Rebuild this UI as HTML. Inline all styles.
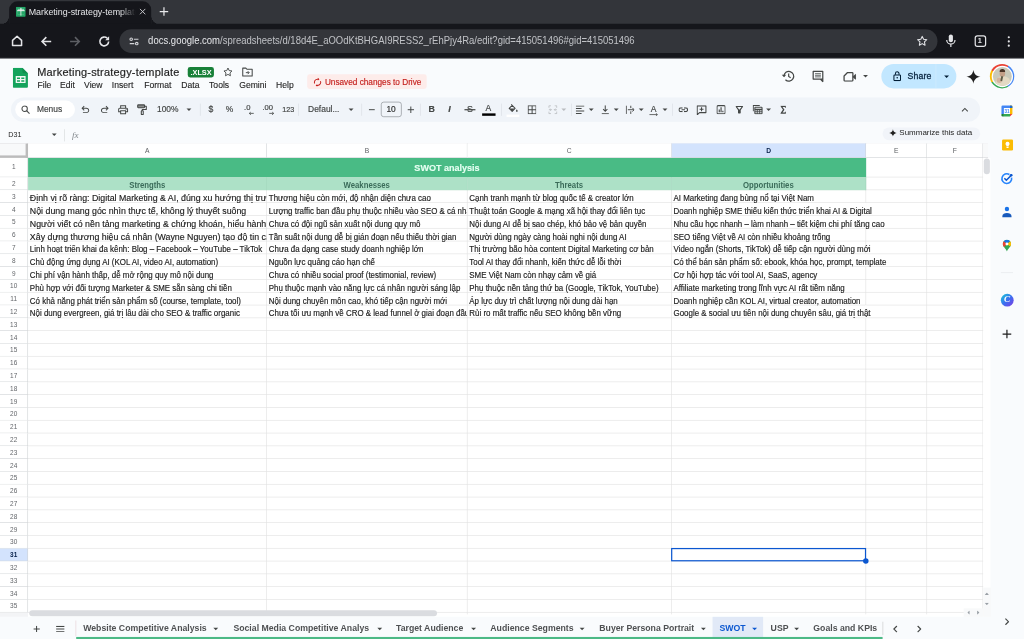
<!DOCTYPE html>
<html lang="en">
<head>
<meta charset="utf-8">
<title>Marketing-strategy-template</title>
<style>
html,body{margin:0;padding:0;width:1024px;height:639px;overflow:hidden;background:#fff;}
*{box-sizing:border-box;}
#clip{position:absolute;left:0;top:0;width:1024px;height:639px;overflow:hidden;}
#app{position:absolute;left:0;top:0;width:1680px;height:1049px;transform:scale(0.609524);transform-origin:0 0;
 font-family:"Liberation Sans",sans-serif;color:#1f1f1f;background:#f9fbfd;overflow:hidden;}
.abs{position:absolute;}
.ic{position:absolute;transform:translate(-50%,-50%);display:block;}
.t{position:absolute;white-space:nowrap;line-height:1;}

/* ---------- Chrome ---------- */
#tabstrip{position:absolute;left:0;top:0;width:1680px;height:40px;background:#33353a;}
#tab{position:absolute;left:15px;top:2px;width:233px;height:38px;background:#15161b;border-radius:14px 14px 0 0;}
#tab:before,#tab:after{content:"";position:absolute;bottom:0;width:14px;height:14px;}
#tab:before{left:-14px;background:radial-gradient(circle at 0 0,rgba(0,0,0,0) 13.5px,#15161b 14px);}
#tab:after{right:-14px;background:radial-gradient(circle at 100% 0,rgba(0,0,0,0) 13.5px,#15161b 14px);}
#ctool{position:absolute;left:0;top:39px;width:1680px;height:56px;background:#15161b;}
#omni{position:absolute;left:196px;top:9px;width:1342px;height:39px;border-radius:20px;background:#33353a;}

/* ---------- Sheets header ---------- */
#shead{position:absolute;left:0;top:95px;width:1680px;height:64px;background:#f9fbfd;}
.menu{position:absolute;top:38.300px;font-size:14.100px;color:#1f1f1f;-webkit-text-stroke:0.200px #1f1f1f;white-space:nowrap;line-height:1;}
#tbar{position:absolute;left:18px;top:159.5px;width:1590px;height:40px;border-radius:20px;background:#f0f4f9;}
.sep{position:absolute;top:10px;width:1px;height:20px;background:#d9dde3;}
.tx{position:absolute;white-space:nowrap;line-height:1;color:#444746;-webkit-text-stroke:0.300px #444746;}
.dd{position:absolute;width:0;height:0;border-left:4.2px solid transparent;border-right:4.2px solid transparent;border-top:4.6px solid #444746;transform:translate(-50%,-50%);}

/* ---------- Grid ---------- */
#sheet{position:absolute;left:0;top:199.5px;width:1626px;height:813px;background:#f9fbfd;}
#grid{position:absolute;left:0;top:35.5px;width:1621px;height:774px;overflow:hidden;background:#fff;}
.colh{position:absolute;top:0;height:24px;background:#fff;border-right:1px solid #d0d3d6;border-bottom:1px solid #d0d3d6;font-size:11px;color:#5b5e61;text-align:center;line-height:24px;}
.rowh{position:absolute;left:0;width:46px;background:#fff;border-right:1px solid #d0d3d6;border-bottom:1px solid #d0d3d6;font-size:10.600px;color:#63666a;text-align:center;}
.vl{position:absolute;top:24px;width:1px;height:750px;background:#e1e1e1;}
.hl{position:absolute;left:46px;width:1575px;height:1px;background:#e1e1e1;}
.cell{position:absolute;height:22px;line-height:27px;font-size:13.700px;color:#1b1b1b;-webkit-text-stroke:0.250px #1b1b1b;white-space:nowrap;overflow:hidden;padding-left:2.600px;}
.big{font-size:15px;line-height:25.4px;}
.sx{display:inline-block;transform:scaleX(0.950);transform-origin:0 50%;}
.big .sx{transform:scaleX(0.963);}
.hx{display:inline-block;transform:scaleX(0.935);}
.h2{position:absolute;top:57px;height:21px;line-height:27.500px;overflow:hidden;font-size:13.600px;font-weight:bold;color:#3a6b59;text-align:center;background:#ade1c7;border-right:1px solid #a3d6bd;}
</style>
</head>
<body>
<div id="clip"><div id="app">

<!-- ================= CHROME ================= -->
<div id="tabstrip">
  <div id="tab">
    <svg class="abs" style="left:10.5px;top:9px" width="16.5" height="16.5" viewBox="0 0 16 16"><rect width="16" height="16" rx="1.6" fill="#23a566"/><rect x="3" y="3.4" width="10" height="9.2" fill="#8ed1b1"/><rect x="7.2" y="2" width="1.7" height="12" fill="#f1f1f1"/><rect x="2" y="5.6" width="12" height="1.6" fill="#f1f1f1"/><rect x="3" y="7.2" width="4.2" height="5.4" fill="#23a566"/><rect x="8.9" y="7.2" width="4.1" height="5.4" fill="#23a566"/></svg>
    <div class="t" id="tabtitle" style="left:32px;top:6px;height:24px;line-height:24px;font-size:14.6px;color:#e6e7ea;width:176px;overflow:hidden;-webkit-mask-image:linear-gradient(90deg,#000 0,#000 150px,rgba(0,0,0,0) 176px);mask-image:linear-gradient(90deg,#000 0,#000 150px,rgba(0,0,0,0) 176px);">Marketing-strategy-template</div>
    <svg class="ic" style="left:218.5px;top:17px" width="11" height="11" viewBox="0 0 11 11"><path d="M1 1 10 10M10 1 1 10" stroke="#c4c6ca" stroke-width="1.6" fill="none"/></svg>
  </div>
  <svg class="ic" style="left:269px;top:19px" width="16" height="16" viewBox="0 0 16 16"><path d="M8 1v14M1 8h14" stroke="#e8e9eb" stroke-width="2" fill="none"/></svg>
</div>
<div id="ctool">
  <!-- home -->
  <svg class="ic" style="left:28px;top:28px" width="20" height="20" viewBox="0 0 20 20"><path d="M2.600 9.200 10 2.400l7.400 6.800V17.600H2.600Z" fill="none" stroke="#e4e5e8" stroke-width="2.500" stroke-linejoin="round"/></svg>
  <!-- back -->
  <svg class="ic" style="left:75.5px;top:28.5px" width="20" height="20" viewBox="0 0 20 20"><path d="M18 10H3.500M10 3 3 10l7 7" fill="none" stroke="#e4e5e8" stroke-width="2.600"/></svg>
  <!-- forward -->
  <svg class="ic" style="left:123px;top:28.5px" width="20" height="20" viewBox="0 0 20 20"><path d="M2 10h14.500M10 3l7 7-7 7" fill="none" stroke="#5d5f64" stroke-width="2.600"/></svg>
  <!-- reload -->
  <svg class="ic" style="left:170.5px;top:28.5px" width="22" height="22" viewBox="0 0 22 22"><path d="M18.200 11a7.200 7.200 0 1 1-2.200-5.200" fill="none" stroke="#e4e5e8" stroke-width="2.600"/><path d="M19 2.6V9h-6.4Z" fill="#e4e5e8"/></svg>
  <div id="omni">
    <!-- tune -->
    <svg class="ic" style="left:24px;top:19.500px" width="17.500" height="14.300" viewBox="0 0 22 18"><g fill="none" stroke="#d3d4d8" stroke-width="2.300"><circle cx="5" cy="4.500" r="2.600"/><path d="M10.5 4.5H20"/><circle cx="16.5" cy="13.5" r="2.6"/><path d="M2 13.5h9.5"/></g></svg>
    <div class="t" id="url" style="left:47px;top:11.500px;font-size:16.800px;color:#c0c2c6;transform:scaleX(0.930);transform-origin:0 0;"><span style="color:#e6e7ea">docs.google.com</span>/spreadsheets/d/18d4E_aOOdKtBHGAI9RESS2_rEhPjy4Ra/edit?gid=415051496#gid=415051496</div>
    <!-- star -->
    <svg class="ic" style="left:1316.5px;top:19px" width="21" height="21" viewBox="0 0 24 24"><path d="M12 3.6l2.6 5.5 6 .8-4.4 4.2 1.1 6L12 17.2 6.7 20.1l1.1-6L3.4 9.9l6-.8z" fill="none" stroke="#e4e5e8" stroke-width="2" stroke-linejoin="round"/></svg>
  </div>
  <!-- mic -->
  <svg class="ic" style="left:1560px;top:28px" width="20" height="24" viewBox="0 0 20 24"><rect x="6.6" y="1.5" width="6.8" height="13" rx="3.4" fill="#e4e5e8"/><path d="M3.2 10.5a6.8 6.8 0 0 0 13.6 0M10 17.5V22" fill="none" stroke="#e4e5e8" stroke-width="2"/></svg>
  <!-- tab count -->
  <div class="abs" style="left:1598.5px;top:18.5px;width:19px;height:19px;border:2px solid #e4e5e8;border-radius:4.5px;"></div>
  <div class="t" style="left:1604.3px;top:22.4px;font-size:12px;font-weight:bold;color:#e4e5e8;">1</div>
  <!-- dots -->
  <svg class="ic" style="left:1655px;top:28.500px" width="5.200" height="19" viewBox="0 0 6 22"><circle cx="3" cy="3" r="2.1" fill="#e4e5e8"/><circle cx="3" cy="11" r="2.1" fill="#e4e5e8"/><circle cx="3" cy="19" r="2.1" fill="#e4e5e8"/></svg>
</div>

<!-- ================= SHEETS HEADER ================= -->
<div id="shead">
  <!-- logo -->
  <svg class="abs" style="left:21px;top:15.700px" width="24.800" height="33.500" viewBox="0 0 26 35" preserveAspectRatio="none"><path d="M2.4 0H16.5L26 9.5V32.6a2.4 2.4 0 0 1-2.4 2.4H2.4A2.4 2.4 0 0 1 0 32.6V2.4A2.4 2.4 0 0 1 2.4 0Z" fill="#14a35c"/><path d="M16.5 0 26 9.5H18.9a2.4 2.4 0 0 1-2.4-2.4Z" fill="#0c8043" opacity=".55"/><path d="M5 14.500h17v12H5Zm2.200 2.200v2.800h5.200v-2.800Zm7.400 0v2.800h5.200v-2.800ZM7.200 21.500v2.800h5.200v-2.800Zm7.400 0v2.800h5.200v-2.800Z" fill="#f1f8f4" fill-rule="evenodd"/></svg>
  <div class="t" id="doctitle" style="left:61px;top:13.600px;font-size:18px;letter-spacing:0.350px;color:#1f1f1f;-webkit-text-stroke:0.300px #1f1f1f;">Marketing-strategy-template</div>
  <div class="abs" style="left:308px;top:14.800px;width:42.500px;height:17.500px;border-radius:4px;background:#188038;"></div>
  <div class="t" style="left:312.500px;top:17.800px;font-size:12px;font-weight:bold;color:#fff;">.XLSX</div>
  <!-- star -->
  <svg class="ic" style="left:374px;top:22.800px" width="19" height="19" viewBox="0 0 24 24"><path d="M12 3.9l2.5 5.3 5.8.8-4.2 4.1 1 5.8L12 17.1l-5.1 2.8 1-5.8L3.7 10l5.8-.8z" fill="none" stroke="#444746" stroke-width="1.9" stroke-linejoin="round"/></svg>
  <!-- move to folder -->
  <svg class="ic" style="left:405.500px;top:22.800px" width="19" height="17" viewBox="0 0 20 18"><path d="M1.8 2.4h5.4l1.8 2h9.2v11.6H1.8Z" fill="none" stroke="#444746" stroke-width="1.8" stroke-linejoin="round"/><path d="M7.2 10.2h5.2M10.4 7.6l2.6 2.6-2.6 2.6" fill="none" stroke="#444746" stroke-width="1.6"/></svg>
  <div class="menu" style="left:61.5px">File</div>
  <div class="menu" style="left:98.5px">Edit</div>
  <div class="menu" style="left:138px">View</div>
  <div class="menu" style="left:183.5px">Insert</div>
  <div class="menu" style="left:236.5px">Format</div>
  <div class="menu" style="left:297.5px">Data</div>
  <div class="menu" style="left:343px">Tools</div>
  <div class="menu" style="left:392.5px">Gemini</div>
  <div class="menu" style="left:453px">Help</div>
  <!-- unsaved -->
  <div class="abs" style="left:504px;top:27.300px;width:196px;height:24px;border-radius:4px;background:#fdecea;"></div>
  <svg class="ic" style="left:520.500px;top:39.500px" width="15.500" height="15.500" viewBox="0 0 17 17"><path d="M3.2 10.6A5.6 5.6 0 0 1 8.5 2.9h1.2M13.8 6.4a5.6 5.6 0 0 1-5.3 7.7H7.3" fill="none" stroke="#c5221f" stroke-width="1.8"/><path d="M9 .3l3 2.6-3 2.6ZM8 11.5l-3 2.6 3 2.6Z" fill="#c5221f"/></svg>
  <div class="t" style="left:533px;top:33px;font-size:13.500px;color:#c5221f;-webkit-text-stroke:0.250px #c5221f;">Unsaved changes to Drive</div>
</div>


<!-- right header buttons -->
<div class="abs" id="hright" style="left:0;top:95px;width:1680px;height:64px;">
  <!-- history -->
  <svg class="ic" style="left:1293px;top:30px" width="24" height="22" viewBox="0 0 26 24"><path d="M5.600 12a8.700 8.700 0 1 1 2.600 6.300" fill="none" stroke="#444746" stroke-width="2.200"/><path d="M1.600 9.600 5.700 14l4-4.400Z" fill="#444746"/><path d="M14 7v5.600l3.600 2.200" fill="none" stroke="#444746" stroke-width="2.100"/></svg>
  <!-- comments -->
  <svg class="ic" style="left:1342px;top:29.500px" width="21" height="21" viewBox="0 0 24 24"><path d="M3 3h18v14.500H16.500L21 22V17.500H3Z" fill="none" stroke="#444746" stroke-width="2.300" stroke-linejoin="round"/><path d="M6.500 7.300h11M6.500 10.300h11M6.500 13.300h11" stroke="#444746" stroke-width="1.500"/></svg>
  <!-- meet -->
  <svg class="ic" style="left:1393.500px;top:30.500px" width="22" height="17.500" viewBox="0 0 25 20"><path d="M8.500 2H17a1.500 1.500 0 0 1 1.500 1.500v13A1.500 1.500 0 0 1 17 18H3.500A1.500 1.500 0 0 1 2 16.500V8.500Z" fill="none" stroke="#444746" stroke-width="2.400" stroke-linejoin="round"/><path d="M18.500 10 23.500 5.500v9Z" fill="#444746" stroke="#444746" stroke-width="1.600" stroke-linejoin="round"/></svg>
  <div class="dd" style="left:1419.500px;top:29.500px;"></div>
  <!-- share -->
  <div class="abs" style="left:1446px;top:10px;width:123px;height:40px;border-radius:20px;background:#c2e7ff;"></div>
  <div class="abs" style="left:1534.500px;top:10px;width:1.500px;height:40px;background:#d3ecfd;"></div>
  <svg class="ic" style="left:1471.500px;top:29.500px" width="13.500" height="17" viewBox="0 0 15 19"><rect x="1.400" y="7.200" width="12.200" height="10.400" rx="1.600" fill="none" stroke="#001d35" stroke-width="2"/><path d="M4.200 7V4.800a3.300 3.300 0 0 1 6.600 0V7" fill="none" stroke="#001d35" stroke-width="1.900"/><circle cx="7.500" cy="12.400" r="1.500" fill="#001d35"/></svg>
  <div class="t" id="share" style="left:1489px;top:22.500px;font-size:14.300px;color:#0a2540;-webkit-text-stroke:0.500px #0a2540;letter-spacing:0.200px">Share</div>
  <div class="dd" style="left:1552.500px;top:31px;border-top-color:#001d35"></div>
  <!-- gemini spark -->
  <svg class="ic" style="left:1597px;top:30.500px" width="25" height="25" viewBox="0 0 28 28"><path d="M14 1c.9 7.600 5.400 12.100 13 13-7.600.9-12.100 5.400-13 13-.9-7.600-5.400-12.100-13-13 7.600-.9 12.100-5.400 13-13z" fill="#1f1f1f"/></svg>
  <!-- avatar -->
  <div class="abs" style="left:1624.200px;top:10px;width:40px;height:40px;border-radius:50%;background:conic-gradient(from -60deg,#ea4335 0 90deg,#4285f4 90deg 210deg,#34a853 210deg 300deg,#fbbc04 300deg 360deg);"></div>
  <div class="abs" style="left:1626.700px;top:12.500px;width:35px;height:35px;border-radius:50%;background:#fff;"></div>
  <div class="abs" style="left:1628.700px;top:14.500px;width:31px;height:31px;border-radius:50%;background:#c9c9ba;overflow:hidden;">
    <div class="abs" style="left:4px;top:15px;width:25px;height:22px;border-radius:11px 11px 0 0;background:#e3d9c3;"></div>
    <div class="abs" style="left:11.500px;top:5.500px;width:8.500px;height:11px;border-radius:45%;background:#c39f88;"></div>
    <div class="abs" style="left:11px;top:3.500px;width:9.500px;height:5px;border-radius:5px 5px 1px 1px;background:#4a3428;"></div>
    <div class="abs" style="left:6px;top:17px;width:9px;height:9px;border-radius:50%;background:#d2b49d;"></div>
    <div class="abs" style="left:13px;top:15px;width:2.500px;height:8px;background:#5c5a46;transform:rotate(12deg)"></div>
  </div>
</div>

<div class="abs" style="left:0;top:94px;width:1680px;height:1.800px;background:#15161b;"></div>
<!-- ================= TOOLBAR ================= -->
<div id="tbar">
  <div class="abs" style="left:7px;top:5.500px;width:98px;height:29px;border-radius:14.500px;background:#fff;"></div>
  <svg class="ic" style="left:24px;top:20.500px" width="15" height="15" viewBox="0 0 16 16"><circle cx="6.300" cy="6.300" r="4.700" fill="none" stroke="#444746" stroke-width="1.800"/><path d="M9.700 9.700 14.800 14.800" stroke="#444746" stroke-width="1.900"/></svg>
  <div class="tx" style="left:42.500px;top:13.200px;font-size:13.800px;">Menus</div>
  <!-- undo / redo -->
  <svg class="ic" style="left:121.500px;top:20.500px" width="19" height="19" viewBox="0 -960 960 960"><path fill="#444746" d="M280-200v-80h284q63 0 109.500-40T720-420q0-60-46.500-100T564-560H312l104 104-56 56-200-200 200-200 56 56-104 104h252q97 0 166.500 63T800-420q0 94-69.500 157T564-200H280Z"/></svg>
  <svg class="ic" style="left:153.500px;top:20.500px" width="19" height="19" viewBox="0 -960 960 960"><path fill="#444746" d="M396-200q-97 0-166.500-63T160-420q0-94 69.500-157T396-640h252L544-744l56-56 200 200-200 200-56-56 104-104H396q-63 0-109.500 40T240-420q0 60 46.500 100T396-280h284v80H396Z"/></svg>
  <!-- print -->
  <svg class="ic" style="left:184px;top:20.500px" width="19.500" height="19.500" viewBox="0 -960 960 960"><path fill="#444746" d="M640-640v-120H320v120h-80v-200h480v200h-80Zm-480 80h640-640Zm560 100q17 0 28.500-11.500T760-500q0-17-11.500-28.500T720-540q-17 0-28.500 11.500T680-500q0 17 11.500 28.500T720-460Zm-80 260v-160H320v160h320Zm80 80H240v-160H80v-240q0-51 35-85.500t85-34.500h560q51 0 85.500 34.500T880-520v240H720v160Zm80-240v-160q0-17-11.500-28.500T760-560H200q-17 0-28.500 11.500T160-520v160h80v-80h480v80h80Z"/></svg>
  <!-- paint format -->
  <svg class="ic" style="left:215px;top:20.500px" width="20" height="20" viewBox="0 0 24 24"><g fill="none" stroke="#444746" stroke-width="2.100" stroke-linejoin="round"><rect x="3.500" y="2.500" width="13.500" height="5.500" rx="1.200" fill="#8a8d8c"/><path d="M17 5.200h3.400v6.300h-7.900v2.700"/><rect x="10.600" y="14.200" width="3.800" height="7.300" rx=".8"/></g></svg>
  <div class="tx" style="left:239.500px;top:13.200px;font-size:13.800px;">100%</div>
  <div class="dd" style="left:292px;top:20.500px;"></div>
  <div class="sep" style="left:310px;"></div>
  <div class="tx" style="left:324px;top:12.800px;font-size:14.200px;">$</div>
  <div class="tx" style="left:352.500px;top:13px;font-size:13.800px;">%</div>
  <div class="tx" style="left:382.500px;top:11.500px;font-size:12.500px;">.0</div>
  <svg class="ic" style="left:393.500px;top:26.500px" width="9" height="6.300" viewBox="0 0 10 7"><path d="M10 3.500H2M4.500 .8 1.600 3.500l2.900 2.700" fill="none" stroke="#444746" stroke-width="1.500"/></svg>
  <div class="tx" style="left:412.500px;top:11.500px;font-size:12.500px;">.00</div>
  <svg class="ic" style="left:427.500px;top:26.500px" width="9" height="6.300" viewBox="0 0 10 7"><path d="M0 3.500H8M5.500 .8l2.900 2.700-2.900 2.700" fill="none" stroke="#444746" stroke-width="1.500"/></svg>
  <div class="tx" style="left:445px;top:14.200px;font-size:11.800px;">123</div>
  <div class="sep" style="left:470.500px;"></div>
  <div class="tx" style="left:487.500px;top:13.200px;font-size:13.800px;">Defaul...</div>
  <div class="dd" style="left:558px;top:20.500px;"></div>
  <div class="sep" style="left:575px;"></div>
  <svg class="ic" style="left:592px;top:20.500px" width="10" height="2.500" viewBox="0 0 12 3"><rect width="12" height="2" y=".5" fill="#444746"/></svg>
  <div class="abs" style="left:606.500px;top:7.500px;width:34px;height:25px;border:1.200px solid #80868b;border-radius:4.500px;background:#f0f4f9;"></div>
  <div class="tx" style="left:616px;top:13.200px;font-size:13.800px;color:#1f1f1f">10</div>
  <svg class="ic" style="left:655.500px;top:20.500px" width="11" height="11" viewBox="0 0 13 13"><path d="M6.500 0v13M0 6.500h13" stroke="#444746" stroke-width="1.900"/></svg>
  <div class="sep" style="left:671px;"></div>
  <div class="tx" style="left:685px;top:12.800px;font-size:14.500px;font-weight:bold;">B</div>
  <div class="tx" style="left:717.500px;top:12.800px;font-size:14.500px;font-style:italic;font-weight:bold;">I</div>
  <div class="tx" style="left:748px;top:12.800px;font-size:14.500px;">S</div>
  <div class="abs" style="left:744px;top:19.800px;width:17.500px;height:1.800px;background:#444746;"></div>
  <div class="tx" style="left:778.500px;top:10px;font-size:14px;">A</div>
  <div class="abs" style="left:772.500px;top:26.500px;width:22px;height:3.800px;background:#000;"></div>
  <div class="sep" style="left:803.500px;"></div>
  <!-- fill -->
  <svg class="ic" style="left:823.500px;top:18px" width="17.4" height="15.7" viewBox="0 0 20 18"><path d="M6.200 1.400 13.600 8.800 8 14.400 2.400 8.800 7.900 3.300" fill="none" stroke="#444746" stroke-width="1.900" stroke-linejoin="round"/><path d="M3.200 9h9.800L8 14Z" fill="#444746"/><path d="M16.800 10.600c1 1.400 1.600 2.300 1.600 3.100a1.600 1.600 0 0 1-3.200 0c0-.8.600-1.700 1.600-3.100z" fill="#444746"/></svg>
  <div class="abs" style="left:813px;top:28.500px;width:21px;height:3.500px;background:#fff;"></div>
  <!-- borders -->
  <svg class="ic" style="left:854.500px;top:20.500px" width="14.8" height="14.8" viewBox="0 0 17 17"><path d="M1 1h15v15H1ZM8.500 1v15M1 8.500h15" fill="none" stroke="#444746" stroke-width="1.900"/></svg>
  <!-- merge (disabled) -->
  <svg class="ic" style="left:889px;top:20.500px" width="14.8" height="14.8" viewBox="0 0 17 17"><path d="M1 5V1h4M12 1h4v4M16 12v4h-4M5 16H1v-4M1 8.500h4.500M16 8.500h-4.500M3.800 6.500l2 2-2 2M13.200 6.500l-2 2 2 2" fill="none" stroke="#b9bcc0" stroke-width="1.700"/></svg>
  <div class="dd" style="left:907px;top:20.500px;border-top-color:#b9bcc0"></div>
  <div class="sep" style="left:918.500px;"></div>
  <!-- align -->
  <svg class="ic" style="left:933.500px;top:20.500px" width="14.8" height="13.9" viewBox="0 0 17 16"><path d="M0 1h17M0 5.700h11M0 10.300h17M0 15h11" stroke="#444746" stroke-width="1.900"/></svg>
  <div class="dd" style="left:951.500px;top:20.500px;"></div>
  <!-- valign bottom -->
  <svg class="ic" style="left:974.500px;top:20.500px" width="12.2" height="14.8" viewBox="0 0 14 17"><path d="M0 16h14M7 0v11M3 7.500l4 4 4-4" fill="none" stroke="#444746" stroke-width="1.900"/></svg>
  <div class="dd" style="left:992.500px;top:20.500px;"></div>
  <!-- wrap/overflow -->
  <svg class="ic" style="left:1015.500px;top:20.500px" width="14.8" height="13.9" viewBox="0 0 17 16"><path d="M1 0v16M9.500 0v5M9.500 11v5M4 8h11.500M12.500 4.500 16 8l-3.500 3.500" fill="none" stroke="#444746" stroke-width="1.800"/></svg>
  <div class="dd" style="left:1033.500px;top:20.500px;"></div>
  <!-- rotate -->
  <div class="tx" style="left:1049.500px;top:11px;font-size:14px;">A</div>
  <svg class="ic" style="left:1055px;top:28.500px" width="15.7" height="5.2" viewBox="0 0 18 6"><path d="M0 3h15M12.500 .5 15.500 3l-3 2.500" fill="none" stroke="#444746" stroke-width="1.500"/></svg>
  <div class="dd" style="left:1073px;top:20.500px;"></div>
  <div class="sep" style="left:1084.500px;"></div>
  <!-- link -->
  <svg class="ic" style="left:1102.500px;top:20.500px" width="16" height="8" viewBox="0 0 20 10"><path d="M8.500 1.200H5a3.800 3.800 0 0 0 0 7.600h3.500M11.500 1.200H15a3.800 3.800 0 0 1 0 7.600h-3.500M6.500 5h7" fill="none" stroke="#444746" stroke-width="2.300"/></svg>
  <!-- add comment -->
  <svg class="ic" style="left:1133px;top:21px" width="16.500" height="16.500" viewBox="0 0 19 19"><path d="M1.200 1.200h16.600v12.600H5.600L1.200 18Z" fill="none" stroke="#444746" stroke-width="2.100" stroke-linejoin="round"/><path d="M9.500 3.800v7.400M5.800 7.500h7.400" stroke="#444746" stroke-width="2"/></svg>
  <!-- chart -->
  <svg class="ic" style="left:1164.500px;top:20.500px" width="15.200" height="15.200" viewBox="0 0 17 17"><rect x="1" y="1" width="15" height="15" rx="2" fill="none" stroke="#444746" stroke-width="2"/><path d="M5.200 13V8.200M8.500 13V4.200M11.800 13v-2.800" stroke="#444746" stroke-width="2.100"/></svg>
  <!-- filter -->
  <svg class="ic" style="left:1194.500px;top:20.500px" width="13" height="13.500" viewBox="0 0 16 16"><path d="M1.500 1.500h13L9.500 8.200v6H6.500v-6Z" fill="none" stroke="#444746" stroke-width="2.400" stroke-linejoin="round"/><path d="M6.500 8h3v6.500h-3Z" fill="#444746"/></svg>
  <!-- filter views -->
  <svg class="ic" style="left:1225px;top:20.500px" width="16.500" height="16" viewBox="0 0 19 18"><path d="M1.200 12V1.200h12.300" fill="none" stroke="#444746" stroke-width="2"/><rect x="4.300" y="4.300" width="13.500" height="12.500" rx="1" fill="none" stroke="#444746" stroke-width="2"/><path d="M4.300 8.500H18" stroke="#444746" stroke-width="2.600"/><path d="M8.800 8.500V17M13.300 8.500V17M4.300 12.800H18" stroke="#444746" stroke-width="1.600"/></svg>
  <div class="dd" style="left:1242.500px;top:20.500px;"></div>
  <!-- sigma -->
  <svg class="ic" style="left:1266.500px;top:20.500px" width="9.500" height="13.500" viewBox="0 0 11 16"><path d="M10 4V1.300H1.800l4.600 6.700-4.600 6.700H10V12" fill="none" stroke="#444746" stroke-width="2.500" stroke-linejoin="miter"/></svg>
  <!-- collapse -->
  <svg class="ic" style="left:1564.500px;top:20.500px" width="12.200" height="7.800" viewBox="0 0 14 9"><path d="M1.500 7.500 7 2l5.500 5.500" fill="none" stroke="#444746" stroke-width="2"/></svg>
</div>


<!-- ================= SHEET AREA ================= -->
<div id="sheet">
  <!-- formula bar -->
  <div class="t" style="left:13.500px;top:15.800px;font-size:11.800px;color:#1f1f1f;">D31</div>
  <div class="dd" style="left:88.500px;top:21.200px;"></div>
  <div class="abs" style="left:104.500px;top:12px;width:1px;height:20px;background:#d5d7da;"></div>
  <div class="t" style="left:118px;top:14.200px;font-size:15px;font-style:italic;font-family:'Liberation Serif',serif;color:#80868b;">fx</div>
  <div class="abs" style="left:1448px;top:9.500px;width:160px;height:20.500px;border-radius:10.500px;background:#f1f4f9;"></div>
  <svg class="ic" style="left:1465px;top:18.500px" width="13" height="13" viewBox="0 0 28 28"><path d="M14 1c.9 7.6 5.4 12.1 13 13-7.6.9-12.1 5.4-13 13-.9-7.6-5.4-12.1-13-13 7.600-.9 12.100-5.400 13-13z" fill="#1f1f1f"/></svg>
  <div class="t" style="left:1475.5px;top:11px;font-size:13.100px;color:#1f1f1f;">Summarize this data</div>
<!--GRID-->
<div id="grid" style="top:35px">
<div class="hl" style="top:55px"></div>
<div class="hl" style="top:76px"></div>
<div class="hl" style="top:97px"></div>
<div class="hl" style="top:118px"></div>
<div class="hl" style="top:139px"></div>
<div class="hl" style="top:160px"></div>
<div class="hl" style="top:181px"></div>
<div class="hl" style="top:202px"></div>
<div class="hl" style="top:223px"></div>
<div class="hl" style="top:244px"></div>
<div class="hl" style="top:265px"></div>
<div class="hl" style="top:286px"></div>
<div class="hl" style="top:307px"></div>
<div class="hl" style="top:328px"></div>
<div class="hl" style="top:349px"></div>
<div class="hl" style="top:370px"></div>
<div class="hl" style="top:391px"></div>
<div class="hl" style="top:412px"></div>
<div class="hl" style="top:433px"></div>
<div class="hl" style="top:454px"></div>
<div class="hl" style="top:475px"></div>
<div class="hl" style="top:496px"></div>
<div class="hl" style="top:517px"></div>
<div class="hl" style="top:538px"></div>
<div class="hl" style="top:559px"></div>
<div class="hl" style="top:580px"></div>
<div class="hl" style="top:601px"></div>
<div class="hl" style="top:622px"></div>
<div class="hl" style="top:643px"></div>
<div class="hl" style="top:664px"></div>
<div class="hl" style="top:685px"></div>
<div class="hl" style="top:706px"></div>
<div class="hl" style="top:727px"></div>
<div class="hl" style="top:748px"></div>
<div class="hl" style="top:769px"></div>
<div class="vl" style="left:437px"></div>
<div class="vl" style="left:766px"></div>
<div class="vl" style="left:1101px"></div>
<div class="vl" style="left:1420px"></div>
<div class="vl" style="left:1520px"></div>
<div class="vl" style="left:1612px"></div>
<div class="abs" style="left:46px;top:24px;width:1375px;height:32px;background:#49bb85;"></div>
<div class="t" style="left:46px;top:32.3px;width:1375px;text-align:center;font-size:15.600px;font-weight:bold;color:#e6fff2;-webkit-text-stroke:0.250px #e6fff2;"><span id="swot" style="display:inline-block;transform:scaleX(0.950)">SWOT analysis</span></div>
<div class="h2" style="left:46px;width:392px;top:56px"><span class="hx">Strengths</span></div>
<div class="h2" style="left:438px;width:329px;top:56px"><span class="hx">Weaknesses</span></div>
<div class="h2" style="left:767px;width:335px;top:56px"><span class="hx">Threats</span></div>
<div class="h2" style="left:1102px;width:319px;top:56px"><span class="hx">Opportunities</span></div>
<div class="abs" style="left:1419px;top:98px;width:3px;height:20px;background:#fff"></div>
<div class="abs" style="left:1419px;top:119px;width:3px;height:20px;background:#fff"></div>
<div class="abs" style="left:1419px;top:182px;width:3px;height:20px;background:#fff"></div>
<div class="abs" style="left:1419px;top:266px;width:3px;height:20px;background:#fff"></div>
<div class="cell big" style="left:46px;top:77px;width:391px"><span class="sx">Định vị rõ ràng: Digital Marketing &amp; AI, đúng xu hướng thị trường</span></div>
<div class="cell big" style="left:46px;top:98px;width:391px"><span class="sx">Nội dung mang góc nhìn thực tế, không lý thuyết suông</span></div>
<div class="cell big" style="left:46px;top:119px;width:391px"><span class="sx">Người viết có nền tảng marketing &amp; chứng khoán, hiểu hành vi</span></div>
<div class="cell big" style="left:46px;top:140px;width:391px"><span class="sx">Xây dựng thương hiệu cá nhân (Wayne Nguyen) tạo độ tin cậy</span></div>
<div class="cell" style="left:46px;top:161px;width:391px"><span class="sx">Linh hoạt triển khai đa kênh: Blog – Facebook – YouTube – TikTok</span></div>
<div class="cell" style="left:46px;top:182px;width:391px"><span class="sx">Chủ động ứng dụng AI (KOL AI, video AI, automation)</span></div>
<div class="cell" style="left:46px;top:203px;width:391px"><span class="sx">Chi phí vận hành thấp, dễ mở rộng quy mô nội dung</span></div>
<div class="cell" style="left:46px;top:224px;width:391px"><span class="sx">Phù hợp với đối tượng Marketer &amp; SME sẵn sàng chi tiền</span></div>
<div class="cell" style="left:46px;top:245px;width:391px"><span class="sx">Có khả năng phát triển sản phẩm số (course, template, tool)</span></div>
<div class="cell" style="left:46px;top:266px;width:391px"><span class="sx">Nội dung evergreen, giá trị lâu dài cho SEO &amp; traffic organic</span></div>
<div class="cell" style="left:438px;top:77px;width:328px"><span class="sx">Thương hiệu còn mới, độ nhận diện chưa cao</span></div>
<div class="cell" style="left:438px;top:98px;width:328px"><span class="sx">Lượng traffic ban đầu phụ thuộc nhiều vào SEO &amp; cá nhân</span></div>
<div class="cell" style="left:438px;top:119px;width:328px"><span class="sx">Chưa có đội ngũ sản xuất nội dung quy mô</span></div>
<div class="cell" style="left:438px;top:140px;width:328px"><span class="sx">Tần suất nội dung dễ bị gián đoạn nếu thiếu thời gian</span></div>
<div class="cell" style="left:438px;top:161px;width:328px"><span class="sx">Chưa đa dạng case study doanh nghiệp lớn</span></div>
<div class="cell" style="left:438px;top:182px;width:328px"><span class="sx">Nguồn lực quảng cáo hạn chế</span></div>
<div class="cell" style="left:438px;top:203px;width:328px"><span class="sx">Chưa có nhiều social proof (testimonial, review)</span></div>
<div class="cell" style="left:438px;top:224px;width:328px"><span class="sx">Phụ thuộc mạnh vào năng lực cá nhân người sáng lập</span></div>
<div class="cell" style="left:438px;top:245px;width:328px"><span class="sx">Nội dung chuyên môn cao, khó tiếp cận người mới</span></div>
<div class="cell" style="left:438px;top:266px;width:328px"><span class="sx">Chưa tối ưu mạnh về CRO &amp; lead funnel ở giai đoạn đầu</span></div>
<div class="cell" style="left:767px;top:77px;width:334px"><span class="sx">Cạnh tranh mạnh từ blog quốc tế &amp; creator lớn</span></div>
<div class="cell" style="left:767px;top:98px;width:334px"><span class="sx">Thuật toán Google &amp; mạng xã hội thay đổi liên tục</span></div>
<div class="cell" style="left:767px;top:119px;width:334px"><span class="sx">Nội dung AI dễ bị sao chép, khó bảo vệ bản quyền</span></div>
<div class="cell" style="left:767px;top:140px;width:334px"><span class="sx">Người dùng ngày càng hoài nghi nội dung AI</span></div>
<div class="cell" style="left:767px;top:161px;width:334px"><span class="sx">Thị trường bão hòa content Digital Marketing cơ bản</span></div>
<div class="cell" style="left:767px;top:182px;width:334px"><span class="sx">Tool AI thay đổi nhanh, kiến thức dễ lỗi thời</span></div>
<div class="cell" style="left:767px;top:203px;width:334px"><span class="sx">SME Việt Nam còn nhạy cảm về giá</span></div>
<div class="cell" style="left:767px;top:224px;width:334px"><span class="sx">Phụ thuộc nền tảng thứ ba (Google, TikTok, YouTube)</span></div>
<div class="cell" style="left:767px;top:245px;width:334px"><span class="sx">Áp lực duy trì chất lượng nội dung dài hạn</span></div>
<div class="cell" style="left:767px;top:266px;width:334px"><span class="sx">Rủi ro mất traffic nếu SEO không bền vững</span></div>
<div class="cell" style="left:1102px;top:77px;width:510px"><span class="sx">AI Marketing đang bùng nổ tại Việt Nam</span></div>
<div class="cell" style="left:1102px;top:98px;width:510px"><span class="sx">Doanh nghiệp SME thiếu kiến thức triển khai AI &amp; Digital</span></div>
<div class="cell" style="left:1102px;top:119px;width:510px"><span class="sx">Nhu cầu học nhanh – làm nhanh – tiết kiệm chi phí tăng cao</span></div>
<div class="cell" style="left:1102px;top:140px;width:510px"><span class="sx">SEO tiếng Việt về AI còn nhiều khoảng trống</span></div>
<div class="cell" style="left:1102px;top:161px;width:510px"><span class="sx">Video ngắn (Shorts, TikTok) dễ tiếp cận người dùng mới</span></div>
<div class="cell" style="left:1102px;top:182px;width:510px"><span class="sx">Có thể bán sản phẩm số: ebook, khóa học, prompt, template</span></div>
<div class="cell" style="left:1102px;top:203px;width:510px"><span class="sx">Cơ hội hợp tác với tool AI, SaaS, agency</span></div>
<div class="cell" style="left:1102px;top:224px;width:510px"><span class="sx">Affiliate marketing trong lĩnh vực AI rất tiềm năng</span></div>
<div class="cell" style="left:1102px;top:245px;width:510px"><span class="sx">Doanh nghiệp cần KOL AI, virtual creator, automation</span></div>
<div class="cell" style="left:1102px;top:266px;width:510px"><span class="sx">Google &amp; social ưu tiên nội dung chuyên sâu, giá trị thật</span></div>
<div class="abs" style="left:0;top:0;width:1625px;height:24px;background:#fff;border-top:1px solid #dfe1e4"></div>
<div class="colh" style="left:46px;width:392px">A</div>
<div class="colh" style="left:438px;width:329px">B</div>
<div class="colh" style="left:767px;width:335px">C</div>
<div class="colh" style="left:1102px;width:319px;background:#d3e3fd;color:#041e49;font-weight:bold">D</div>
<div class="colh" style="left:1421px;width:100px">E</div>
<div class="colh" style="left:1521px;width:92px">F</div>
<div class="colh" style="left:1613px;width:12px;border-right:none;background:#f8f9fa"></div>
<div class="rowh" style="top:24px;height:32px;line-height:31.8px">1</div>
<div class="rowh" style="top:56px;height:21px;line-height:20.8px">2</div>
<div class="rowh" style="top:77px;height:21px;line-height:20.8px">3</div>
<div class="rowh" style="top:98px;height:21px;line-height:20.8px">4</div>
<div class="rowh" style="top:119px;height:21px;line-height:20.8px">5</div>
<div class="rowh" style="top:140px;height:21px;line-height:20.8px">6</div>
<div class="rowh" style="top:161px;height:21px;line-height:20.8px">7</div>
<div class="rowh" style="top:182px;height:21px;line-height:20.8px">8</div>
<div class="rowh" style="top:203px;height:21px;line-height:20.8px">9</div>
<div class="rowh" style="top:224px;height:21px;line-height:20.8px">10</div>
<div class="rowh" style="top:245px;height:21px;line-height:20.8px">11</div>
<div class="rowh" style="top:266px;height:21px;line-height:20.8px">12</div>
<div class="rowh" style="top:287px;height:21px;line-height:20.8px">13</div>
<div class="rowh" style="top:308px;height:21px;line-height:20.8px">14</div>
<div class="rowh" style="top:329px;height:21px;line-height:20.8px">15</div>
<div class="rowh" style="top:350px;height:21px;line-height:20.8px">16</div>
<div class="rowh" style="top:371px;height:21px;line-height:20.8px">17</div>
<div class="rowh" style="top:392px;height:21px;line-height:20.8px">18</div>
<div class="rowh" style="top:413px;height:21px;line-height:20.8px">19</div>
<div class="rowh" style="top:434px;height:21px;line-height:20.8px">20</div>
<div class="rowh" style="top:455px;height:21px;line-height:20.8px">21</div>
<div class="rowh" style="top:476px;height:21px;line-height:20.8px">22</div>
<div class="rowh" style="top:497px;height:21px;line-height:20.8px">23</div>
<div class="rowh" style="top:518px;height:21px;line-height:20.8px">24</div>
<div class="rowh" style="top:539px;height:21px;line-height:20.8px">25</div>
<div class="rowh" style="top:560px;height:21px;line-height:20.8px">26</div>
<div class="rowh" style="top:581px;height:21px;line-height:20.8px">27</div>
<div class="rowh" style="top:602px;height:21px;line-height:20.8px">28</div>
<div class="rowh" style="top:623px;height:21px;line-height:20.8px">29</div>
<div class="rowh" style="top:644px;height:21px;line-height:20.8px">30</div>
<div class="rowh" style="top:665px;height:21px;line-height:20.8px;background:#d3e3fd;color:#041e49;font-weight:bold">31</div>
<div class="rowh" style="top:686px;height:21px;line-height:20.8px">32</div>
<div class="rowh" style="top:707px;height:21px;line-height:20.8px">33</div>
<div class="rowh" style="top:728px;height:21px;line-height:20.8px">34</div>
<div class="rowh" style="top:749px;height:21px;line-height:20.8px">35</div>
<div class="abs" style="left:0;top:0;width:46px;height:24px;background:#f8f9fa;border-right:4px solid #bcbcbc;border-bottom:4px solid #bcbcbc;border-top:1px solid #e1e1e1"></div>
<div class="abs" style="left:1101px;top:664px;width:320px;height:22px;border:2px solid #0b57d0;"></div>
<div class="abs" style="left:1416px;top:681.5px;width:9px;height:9px;border-radius:50%;background:#0b57d0;"></div>
</div>
<!--/GRID-->
  <!-- v scrollbar -->
  <div class="abs" style="left:1613px;top:59px;width:12px;height:753px;background:#fff;"></div>
  <div class="abs" style="left:0;top:808px;width:1625px;height:4.500px;background:#fff;"></div>
  <div class="abs" style="left:1614px;top:60.500px;width:9.500px;height:26px;border-radius:5px;background:#dadce0;"></div>
  <div class="abs" style="left:1613px;top:764px;width:13px;height:48px;background:#f8f9fa;"></div>
  <svg class="ic" style="left:1618.500px;top:774.500px" width="7" height="4" viewBox="0 0 7 4"><path d="M0 4 3.500 0 7 4Z" fill="#9aa0a6"/></svg>
  <svg class="ic" style="left:1618.500px;top:791px" width="7" height="4" viewBox="0 0 7 4"><path d="M0 0 3.500 4 7 0Z" fill="#9aa0a6"/></svg>
  <!-- h scrollbar -->
  <div class="abs" style="left:0;top:805px;width:46px;height:7.500px;background:#f3f4f6;"></div>
  <div class="abs" style="left:47.500px;top:801.800px;width:669px;height:9.500px;border-radius:5px;background:#dadce0;"></div>
  <div class="abs" style="left:1581px;top:798px;width:32px;height:14px;background:#f8f9fa;"></div>
  <svg class="ic" style="left:1589px;top:805px" width="4" height="7" viewBox="0 0 4 7"><path d="M4 0 0 3.500 4 7Z" fill="#9aa0a6"/></svg>
  <svg class="ic" style="left:1605px;top:805px" width="4" height="7" viewBox="0 0 4 7"><path d="M0 0 4 3.500 0 7Z" fill="#9aa0a6"/></svg>
</div>

<!-- ================= SHEET TABS ================= -->
<div id="tabs" class="abs" style="left:0;top:1012px;width:1626px;height:37px;background:#f9fbfd;">
<div class="abs" style="left:1169.4px;top:0;width:83.0px;height:37px;background:#e1e9f7;"></div>
<div class="t stab" style="left:136.5px;top:11.5px;font-size:14.300px;font-weight:bold;color:#4f5153;">Website Competitive Analysis</div>
<div class="dd" style="left:354.4px;top:19.5px;border-top-color:#444746"></div>
<div class="t stab" style="left:382.9px;top:11.5px;font-size:14.300px;font-weight:bold;color:#4f5153;">Social Media Competitive Analys</div>
<div class="dd" style="left:622.8px;top:19.5px;border-top-color:#444746"></div>
<div class="t stab" style="left:649.7px;top:11.5px;font-size:14.300px;font-weight:bold;color:#4f5153;">Target Audience</div>
<div class="dd" style="left:776.7px;top:19.5px;border-top-color:#444746"></div>
<div class="t stab" style="left:804.4px;top:11.5px;font-size:14.300px;font-weight:bold;color:#4f5153;">Audience Segments</div>
<div class="dd" style="left:954.8px;top:19.5px;border-top-color:#444746"></div>
<div class="t stab" style="left:983.2px;top:11.5px;font-size:14.300px;font-weight:bold;color:#4f5153;">Buyer Persona Portrait</div>
<div class="dd" style="left:1153.9px;top:19.5px;border-top-color:#444746"></div>
<div class="t stab" style="left:1180.3px;top:11.5px;font-size:14.300px;font-weight:bold;color:#0b57d0;">SWOT</div>
<div class="dd" style="left:1238.0px;top:19.5px;border-top-color:#0b57d0"></div>
<div class="t stab" style="left:1264.3px;top:11.5px;font-size:14.300px;font-weight:bold;color:#4f5153;">USP</div>
<div class="dd" style="left:1307.1px;top:19.5px;border-top-color:#444746"></div>
<div class="t stab" style="left:1334.3px;top:11.5px;font-size:14.300px;font-weight:bold;color:#4f5153;">Goals and KPIs</div>
<div class="abs" style="left:124.7px;top:32.800px;width:1323.0px;height:5px;background:#4cb986;"></div>
<div class="abs" style="left:123.9px;top:6px;width:1px;height:26px;background:#e6cfd3;"></div>
<div class="abs" style="left:1447.7px;top:8px;width:1px;height:22px;background:#c7c7c7;"></div>
<svg class="ic" style="left:60.2px;top:19.500px" width="10.500" height="10.500" viewBox="0 0 13 13"><path d="M6.500 0v13M0 6.500h13" stroke="#444746" stroke-width="2.100"/></svg>
<svg class="ic" style="left:99.3px;top:19.500px" width="14" height="10.500" viewBox="0 0 16 12"><path d="M0 1h16M0 6h16M0 11h16" stroke="#444746" stroke-width="2"/></svg>
<svg class="ic" style="left:1469.2px;top:19.5px" width="8" height="12" viewBox="0 0 8 12"><path d="M6.5 1 1.5 6l5 5" fill="none" stroke="#444746" stroke-width="1.9"/></svg>
<svg class="ic" style="left:1508.2px;top:19.5px" width="8" height="12" viewBox="0 0 8 12"><path d="M1.500 1l5 5-5 5" fill="none" stroke="#444746" stroke-width="1.9"/></svg>
</div>

<!-- ================= SIDE PANEL ================= -->
<div id="side" class="abs" style="left:1626px;top:159px;width:54px;height:890px;background:#f9fbfd;">
<svg class="ic" style="left:26.3px;top:22.8px" width="20" height="20" viewBox="0 0 20 20"><rect x="1" y="1" width="18" height="18" rx="2" fill="#fff"/><path d="M1 3a2 2 0 0 1 2-2h12v4H5v10H1Z" fill="#4285f4"/><path d="M15 1h2a2 2 0 0 1 2 2v12h-4Z" fill="#fbbc04"/><path d="M15 1h2a2 2 0 0 1 2 2v2h-4Z" fill="#1967d2"/><path d="M1 15h4v4H3a2 2 0 0 1-2-2Z" fill="#188038"/><path d="M5 15h10v4H5Z" fill="#34a853"/><path d="M15 15h4l-4 4Z" fill="#ea4335"/><text x="10" y="13.200" font-family="Liberation Sans" font-size="7.500" font-weight="bold" fill="#4285f4" text-anchor="middle">31</text></svg>
<svg class="ic" style="left:26.7px;top:79.2px" width="20" height="20" viewBox="0 0 20 20"><rect x="1" y="1" width="18" height="18" rx="2" fill="#fbbc04"/><path d="M10 4.500a3.400 3.400 0 0 1 1.900 6.200v1.500H8.100v-1.500A3.400 3.400 0 0 1 10 4.500ZM8.300 13.300h3.400v1.500H8.300Z" fill="#fff"/></svg>
<svg class="ic" style="left:26.3px;top:134.3px" width="22" height="22" viewBox="0 0 22 22"><path d="M18.600 9.500a8 8 0 1 1-3.600-5.200" fill="none" stroke="#2684fc" stroke-width="2.600"/><path d="M6.800 10.500l3.200 3.200 9.500-9.500" fill="none" stroke="#0b57d0" stroke-width="2.600"/><circle cx="17.800" cy="5.500" r="2.200" fill="#0b57d0"/></svg>
<svg class="ic" style="left:26.3px;top:188.5px" width="20" height="20" viewBox="0 0 20 20"><circle cx="10" cy="5" r="3.600" fill="#1a73e8"/><path d="M2.500 18.500v-2.200c0-3 3.500-5 7.500-5s7.500 2 7.500 5v2.200Z" fill="#185abc"/></svg>
<svg class="ic" style="left:25.9px;top:244.4px" width="15" height="20" viewBox="0 0 15 20"><path d="M7.500 0.500a6.800 6.800 0 0 1 6.800 6.800c0 4.500-4.800 7.200-6.800 12.200C5.500 14.500.700 11.800.700 7.300A6.800 6.800 0 0 1 7.500.5Z" fill="#34a853"/><path d="M7.500.5a6.800 6.800 0 0 1 5.300 2.500L7.500 7.300 2.200 3A6.800 6.800 0 0 1 7.500.5Z" fill="#1a73e8"/><path d="M12.800 3a6.800 6.800 0 0 1 1.500 4.300c0 1.600-.6 3-1.500 4.300L7.500 7.300Z" fill="#fbbc04"/><path d="M2.200 3 7.500 7.300 3 12.400C1.600 10.900.700 9.200.700 7.300c0-1.600.5-3.100 1.500-4.300Z" fill="#ea4335"/><circle cx="7.500" cy="7.300" r="2.400" fill="#fff"/></svg>
<div class="abs" style="left:16.3px;top:288.2px;width:20px;height:1px;background:#e3e6ea;"></div>
<div class="abs" style="left:15.8px;top:322.7px;width:21px;height:21px;border-radius:50%;background:linear-gradient(135deg,#19c8d8 5%,#3a6ff0 50%,#7b3fe4 95%);"></div>
<div class="t" style="left:21.1px;top:325.4px;font-size:15px;font-style:italic;font-weight:bold;font-family:'Liberation Serif',serif;color:#fff;">C</div>
<svg class="ic" style="left:26.3px;top:389.0px" width="15" height="15" viewBox="0 0 15 15"><path d="M7.500 0v15M0 7.500h15" stroke="#1f1f1f" stroke-width="2"/></svg>
<svg class="ic" style="left:26.3px;top:861.1px" width="8" height="12" viewBox="0 0 8 12"><path d="M1.500 1l5 5-5 5" fill="none" stroke="#444746" stroke-width="1.9"/></svg>
</div>

</div></div>
</body>
</html>
